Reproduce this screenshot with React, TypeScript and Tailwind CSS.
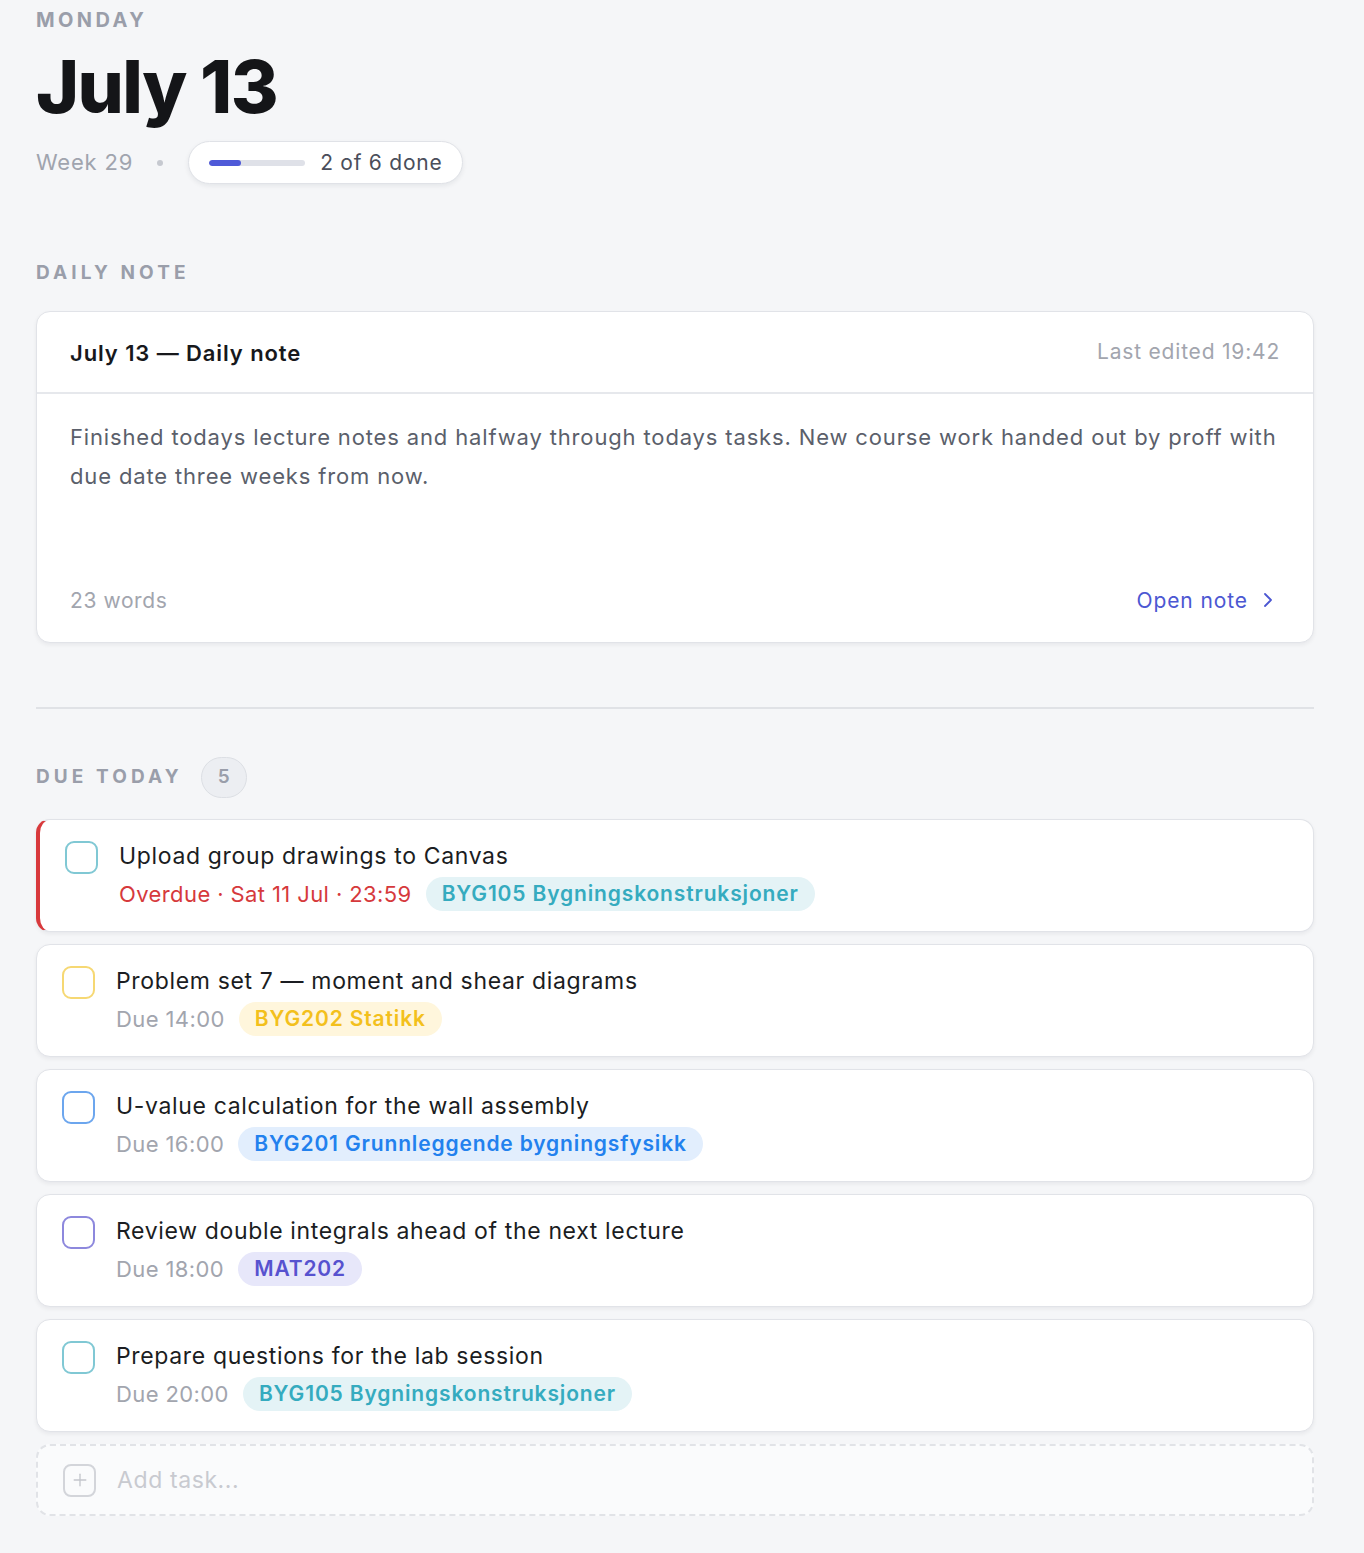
import { ChevronRight, Plus } from "lucide-react";

type Tone = "teal" | "yellow" | "blue" | "purple";

interface Task {
  title: string;
  due: string;
  tag: string;
  tone: Tone;
  overdue?: boolean;
}

const tasks: Task[] = [
  { title: "Upload group drawings to Canvas", due: "Overdue · Sat 11 Jul · 23:59", tag: "BYG105 Bygningskonstruksjoner", tone: "teal", overdue: true },
  { title: "Problem set 7 — moment and shear diagrams", due: "Due 14:00", tag: "BYG202 Statikk", tone: "yellow" },
  { title: "U-value calculation for the wall assembly", due: "Due 16:00", tag: "BYG201 Grunnleggende bygningsfysikk", tone: "blue" },
  { title: "Review double integrals ahead of the next lecture", due: "Due 18:00", tag: "MAT202", tone: "purple" },
  { title: "Prepare questions for the lab session", due: "Due 20:00", tag: "BYG105 Bygningskonstruksjoner", tone: "teal" },
];

// checkbox border / tag bg / tag text per course colour
const toneBox: Record<Tone, string> = {
  teal: "border-[#80c8d4]",
  yellow: "border-[#f6d873]",
  blue: "border-[#6ca6ee]",
  purple: "border-[#8d88dd]",
};

const toneTag: Record<Tone, string> = {
  teal: "bg-[#e4f3f6] text-[#35abbf]",
  yellow: "bg-[#fff6dc] text-[#f3c01c]",
  blue: "bg-[#e2eefd] text-[#2281ee]",
  purple: "bg-[#e7e7fa] text-[#5752cf]",
};

function TaskCard({ task }: { task: Task }) {
  return (
    <div
      className={`flex items-start gap-[21px] bg-white rounded-[14px] border border-[#e1e3e8] shadow-[0_2px_4px_rgba(20,24,40,0.06)] pr-6 pt-[21px] h-[113px] ${
        task.overdue ? "border-l-4 border-l-[#d8393c] pl-[25px]" : "pl-[25px]"
      }`}
    >
      <div className={`w-[33px] h-[33px] shrink-0 rounded-[9px] border-[2.5px] bg-white ${toneBox[task.tone]}`} />
      <div className="flex flex-col">
        <div className="text-[23px] leading-[30px] text-[#1b1d22] tracking-[0.65px]">{task.title}</div>
        <div className="flex items-center gap-[14px] mt-[6px]">
          <span className={`text-[22px] tracking-[0.4px] ${task.overdue ? "text-[#d6393c]" : "text-[#a2a5ae]"}`}>{task.due}</span>
          <span className={`rounded-full px-4 h-[34px] flex items-center text-[21px] font-semibold tracking-[0.85px] ${toneTag[task.tone]}`}>
            {task.tag}
          </span>
        </div>
      </div>
    </div>
  );
}

export default function App() {
  return (
    <main className="min-h-screen bg-[#f5f6f8] font-['Inter',sans-serif] text-[#1b1d22]">
      <div className="px-[36px] pt-[6px] pb-[36px] w-[1350px]">
        {/* Header */}
        <header>
          <div className="text-[20px] font-bold tracking-[3.4px] text-[#9a9eaa] leading-[28px]">MONDAY</div>
          <h1 className="text-[73px] font-extrabold tracking-[-1.6px] leading-[80px] mt-[13px] text-[#141518]">July 13</h1>
          <div className="flex items-center mt-[14px]">
            <span className="text-[22px] text-[#a0a4ae] tracking-[0.8px]">Week 29</span>
            <span className="w-[6px] h-[6px] rounded-full bg-[#c6c9d0] ml-[24px] mr-[25px]" />
            <div className="flex items-center h-[43px] rounded-full bg-white border border-[#e0e2e7] shadow-[0_2px_5px_rgba(20,24,40,0.07)] pl-[20px] pr-[20px] gap-[15px]">
              <div className="w-[96px] h-[6px] rounded-full bg-[#dfe1e8] overflow-hidden">
                <div className="w-[33%] h-full rounded-full bg-[#4f5ad8]" />
              </div>
              <span className="text-[21px] text-[#4a4e5b] tracking-[0.75px]">2 of 6 done</span>
            </div>
          </div>
        </header>

        {/* Daily note */}
        <section className="mt-[75px]">
          <h2 className="text-[19px] font-bold tracking-[4.1px] text-[#9a9eaa]">DAILY NOTE</h2>
          <div className="mt-[23px] bg-white rounded-[14px] border border-[#e1e3e8] shadow-[0_2px_4px_rgba(20,24,40,0.06)]">
            <div className="flex items-center justify-between h-[82px] px-[33px] border-b-2 border-[#e6e8ec]">
              <span className="text-[22px] font-semibold text-[#17181c] tracking-[0.9px] pt-[3px]">July 13 — Daily note</span>
              <span className="text-[21px] text-[#a2a5ae] tracking-[0.8px]">Last edited 19:42</span>
            </div>
            <div className="px-[33px] pt-[24px] pb-[26px]">
              <p className="text-[22px] leading-[39px] text-[#5b5f6b] tracking-[0.85px]">
                Finished todays lecture notes and halfway through todays tasks. New course work handed out by proff with due date three weeks from now.
              </p>
              <div className="flex items-center justify-between mt-[89px]">
                <span className="text-[21px] text-[#a2a5ae] tracking-[0.6px]">23 words</span>
                <span className="flex items-center gap-[8px] text-[21px] text-[#4c57d2] tracking-[0.9px]">
                  Open note
                  <ChevronRight size={24} strokeWidth={1.8} />
                </span>
              </div>
            </div>
          </div>
        </section>

        <div className="h-[2px] bg-[#e0e2e6] mt-[64px]" />

        {/* Due today */}
        <section className="mt-[48px]">
          <div className="flex items-center gap-[18px]">
            <h2 className="text-[19px] font-bold tracking-[4.1px] text-[#9a9eaa]">DUE TODAY</h2>
            <span className="w-[46px] h-[41px] rounded-full bg-[#eceef2] border border-[#dcdfe4] flex items-center justify-center text-[19px] font-semibold text-[#9a9eaa]">
              5
            </span>
          </div>
          <div className="mt-[21px] flex flex-col gap-[12px]">
            {tasks.map((t) => (
              <TaskCard key={t.title + t.due} task={t} />
            ))}
            <div className="flex items-center gap-[21px] h-[72px] rounded-[14px] border-2 border-dashed border-[#e1e3e7] bg-[#fafbfc] pl-[25px]">
              <div className="w-[33px] h-[33px] rounded-[8px] border-2 border-[#d3d5da] flex items-center justify-center text-[#c4c6cc]">
                <Plus size={20} strokeWidth={1.6} />
              </div>
              <span className="text-[23px] text-[#c8cad0] tracking-[0.6px]">Add task...</span>
            </div>
          </div>
        </section>
      </div>
    </main>
  );
}
